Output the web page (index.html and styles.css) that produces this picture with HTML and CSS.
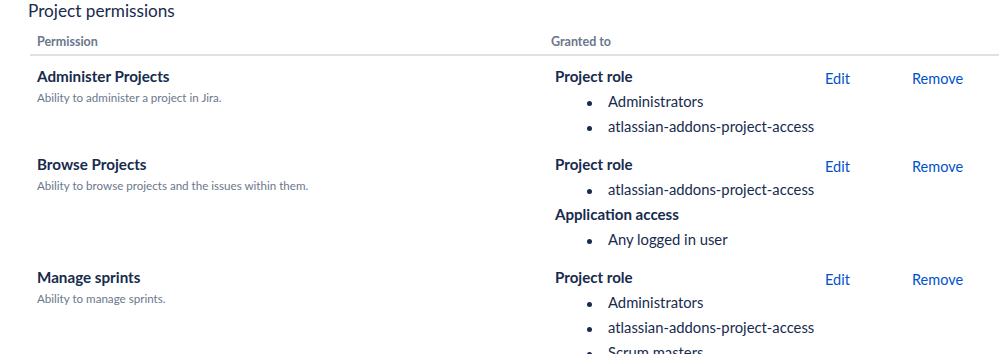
FILE: index.html
```html
<!DOCTYPE html>
<html lang="en">
<head>
<meta charset="utf-8">
<title>Project permissions</title>
<link rel="stylesheet" href="styles.css">
</head>
<body>
<div class="page">
  <h1 class="title">Project permissions</h1>
  <div class="perm-table">
    <div class="perm-head">
      <div class="th th-perm">Permission</div>
      <div class="th th-granted">Granted to</div>
    </div>

    <div class="perm-row">
      <div class="cell-perm">
        <div class="perm-name">Administer Projects</div>
        <div class="perm-desc">Ability to administer a project in Jira.</div>
      </div>
      <div class="cell-granted">
        <div class="grant-type">Project role</div>
        <ul class="grant-list">
          <li>Administrators</li>
          <li>atlassian-addons-project-access</li>
        </ul>
      </div>
      <div class="cell-action"><a class="action" href="#">Edit</a></div>
      <div class="cell-action"><a class="action" href="#">Remove</a></div>
    </div>

    <div class="perm-row">
      <div class="cell-perm">
        <div class="perm-name">Browse Projects</div>
        <div class="perm-desc">Ability to browse projects and the issues within them.</div>
      </div>
      <div class="cell-granted">
        <div class="grant-type">Project role</div>
        <ul class="grant-list">
          <li>atlassian-addons-project-access</li>
        </ul>
        <div class="grant-type">Application access</div>
        <ul class="grant-list">
          <li>Any logged in user</li>
        </ul>
      </div>
      <div class="cell-action"><a class="action" href="#">Edit</a></div>
      <div class="cell-action"><a class="action" href="#">Remove</a></div>
    </div>

    <div class="perm-row">
      <div class="cell-perm">
        <div class="perm-name">Manage sprints</div>
        <div class="perm-desc">Ability to manage sprints.</div>
      </div>
      <div class="cell-granted">
        <div class="grant-type">Project role</div>
        <ul class="grant-list">
          <li>Administrators</li>
          <li>atlassian-addons-project-access</li>
          <li>Scrum masters</li>
        </ul>
      </div>
      <div class="cell-action"><a class="action" href="#">Edit</a></div>
      <div class="cell-action"><a class="action" href="#">Remove</a></div>
    </div>
  </div>
</div>
</body>
</html>
```
FILE: styles.css
```css
html, body {
  margin: 0;
  padding: 0;
  background: #ffffff;
  overflow: hidden;
}

body {
  font-family: Lato, "Noto Sans", sans-serif;
  color: #172b4d;
}

.page {
  padding-left: 28px;
  padding-top: 1px;
}

.title {
  margin: 0;
  font-size: 17.2px;
  font-weight: 400;
  line-height: 20px;
  color: #172b4d;
}

.perm-table {
  margin-left: 2px;
}

.perm-head,
.perm-row {
  display: grid;
  grid-template-columns: 514px 274px 87px 1fr;
}

.perm-head {
  margin-top: 11px;
  padding-top: 2px;
  padding-bottom: 4px;
  border-bottom: 2px solid #dfe1e6;
}

.th {
  font-size: 12.5px;
  font-weight: 700;
  line-height: 16px;
  color: #6b778c;
  padding-left: 7px;
}

.th-granted {
  grid-column: 2 / 5;
}

.perm-row {
  padding: 8px 0 5px;
}

.cell-perm {
  padding-left: 7px;
}

.perm-name {
  font-size: 15.2px;
  font-weight: 700;
  line-height: 24px;
  color: #172b4d;
}

.perm-desc {
  margin-top: 3px;
  font-size: 11.6px;
  line-height: 14px;
  color: #6b778c;
}

.cell-granted {
  padding-left: 11px;
}

.grant-type {
  font-size: 15.1px;
  font-weight: 700;
  line-height: 25px;
  color: #172b4d;
}

.grant-list {
  list-style: none;
  margin: 0;
  padding: 0 0 0 53px;
}

.grant-list li {
  font-size: 14.8px;
  line-height: 25px;
  color: #172b4d;
}

.grant-list li::before {
  content: "";
  display: inline-block;
  width: 5px;
  height: 5px;
  border-radius: 50%;
  background: #172b4d;
  margin: 0 16px 0 -21px;
  vertical-align: middle;
}

.cell-action {
  padding-left: 7px;
  padding-top: 2px;
}

.action {
  font-size: 14.5px;
  line-height: 25px;
  color: #0052cc;
  text-decoration: none;
}
```
